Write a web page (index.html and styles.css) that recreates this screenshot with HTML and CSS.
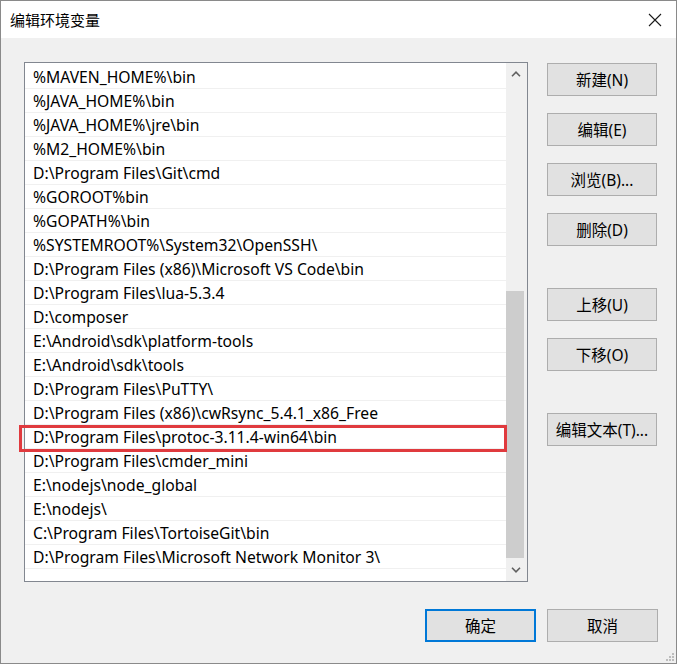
FILE: index.html
```html
<!DOCTYPE html>
<html lang="zh-CN">
<head>
<meta charset="utf-8">
<title>编辑环境变量</title>
<link rel="stylesheet" href="styles.css">
</head>
<body>
<div class="window">
  <div class="titlebar">
    <span class="title">编辑环境变量</span>
    <svg class="close" width="14" height="14" viewBox="0 0 14 14"><path d="M1 1 L13 13 M13 1 L1 13" stroke="#1a1a1a" stroke-width="1.1" fill="none"/></svg>
  </div>
  <div class="content">
    <div class="main">
      <div class="listbox">
        <ul class="items">
          <li>%MAVEN_HOME%\bin</li>
          <li>%JAVA_HOME%\bin</li>
          <li>%JAVA_HOME%\jre\bin</li>
          <li>%M2_HOME%\bin</li>
          <li>D:\Program Files\Git\cmd</li>
          <li>%GOROOT%bin</li>
          <li>%GOPATH%\bin</li>
          <li>%SYSTEMROOT%\System32\OpenSSH\</li>
          <li>D:\Program Files (x86)\Microsoft VS Code\bin</li>
          <li>D:\Program Files\lua-5.3.4</li>
          <li>D:\composer</li>
          <li>E:\Android\sdk\platform-tools</li>
          <li>E:\Android\sdk\tools</li>
          <li>D:\Program Files\PuTTY\</li>
          <li>D:\Program Files (x86)\cwRsync_5.4.1_x86_Free</li>
          <li>D:\Program Files\protoc-3.11.4-win64\bin</li>
          <li>D:\Program Files\cmder_mini</li>
          <li>E:\nodejs\node_global</li>
          <li>E:\nodejs\</li>
          <li>C:\Program Files\TortoiseGit\bin</li>
          <li>D:\Program Files\Microsoft Network Monitor 3\</li>
        </ul>
        <div class="scrollbar">
          <div class="arrow">
            <svg width="10" height="6" viewBox="0 0 10 6"><path d="M1 5.2 L5 1.2 L9 5.2" stroke="#606060" stroke-width="1.6" fill="none"/></svg>
          </div>
          <div class="track"><div class="thumb"></div></div>
          <div class="arrow">
            <svg width="10" height="6" viewBox="0 0 10 6"><path d="M1 0.8 L5 4.8 L9 0.8" stroke="#606060" stroke-width="1.6" fill="none"/></svg>
          </div>
        </div>
      </div>
      <div class="side">
        <button class="btn">新建(N)</button>
        <button class="btn">编辑(E)</button>
        <button class="btn">浏览(B)...</button>
        <button class="btn">删除(D)</button>
        <button class="btn group">上移(U)</button>
        <button class="btn">下移(O)</button>
        <button class="btn group">编辑文本(T)...</button>
      </div>
    </div>
    <div class="footer">
      <button class="btn wide primary">确定</button>
      <button class="btn wide">取消</button>
    </div>
  </div>
  <div class="highlight"></div>
  <svg class="grip" width="8" height="8" viewBox="0 0 8 8">
    <rect x="6" y="0" width="2" height="2" fill="#bdbdbd"/>
    <rect x="3" y="3" width="2" height="2" fill="#bdbdbd"/>
    <rect x="6" y="3" width="2" height="2" fill="#bdbdbd"/>
    <rect x="0" y="6" width="2" height="2" fill="#bdbdbd"/>
    <rect x="3" y="6" width="2" height="2" fill="#bdbdbd"/>
    <rect x="6" y="6" width="2" height="2" fill="#bdbdbd"/>
  </svg>
</div>
</body>
</html>
```
FILE: styles.css
```css
* { box-sizing: border-box; }
html, body { margin: 0; padding: 0; background: #f0f0f0; }
body {
  font-family: "Noto Sans", "Noto Sans CJK SC", sans-serif;
  font-size: 15px;
  color: #000;
}
.window {
  position: relative;
  width: 677px;
  height: 664px;
  border: 1px solid #8a8a8a;
  background: #f0f0f0;
  display: flex;
  flex-direction: column;
}
.titlebar {
  height: 37px;
  background: #fff;
  display: flex;
  align-items: center;
  justify-content: space-between;
  padding: 0 14px 0 9px;
  flex: none;
}
.title {
  font-family: "Noto Sans CJK SC", sans-serif;
  font-size: 15px;
  color: #000;
}
.close { display: block; }
.content {
  flex: 1;
  display: flex;
  flex-direction: column;
  padding: 24px 18px 0 23px;
}
.main {
  display: flex;
  gap: 19px;
  align-items: flex-start;
}
.listbox {
  width: 504px;
  height: 520px;
  border: 1px solid #828790;
  background: #fff;
  display: flex;
}
.items {
  list-style: none;
  margin: 0;
  padding: 2px 0 0 0;
  flex: 1;
  min-width: 0;
}
.items li {
  height: 24px;
  line-height: 25px;
  padding-left: 8px;
  border-bottom: 1px solid #f0f0f0;
  white-space: nowrap;
  font-size: 15.7px;
  overflow: hidden;
}
.scrollbar {
  width: 21px;
  background: #f0f0f0;
  display: flex;
  flex-direction: column;
  flex: none;
}
.arrow {
  height: 22px;
  display: flex;
  align-items: center;
  justify-content: center;
  flex: none;
}
.arrow svg { display: block; margin-left: -2px; }
.track { flex: 1; }
.thumb {
  margin-top: 206px;
  height: 267px;
  width: 18px;
  background: #cdcdcd;
}
.side {
  width: 110px;
  display: flex;
  flex-direction: column;
  gap: 17px;
  margin-top: 1px;
}
.btn {
  height: 33px;
  border: 1px solid #adadad;
  background: #e1e1e1;
  font-family: "Noto Sans", "Noto Sans CJK SC", sans-serif;
  font-size: 15.5px;
  color: #000;
  padding: 0;
}
.side .group { margin-top: 25px; }
.footer {
  display: flex;
  justify-content: flex-end;
  gap: 11px;
  margin-top: 27px;
}
.wide { width: 111px; }
.primary { border: 2px solid #0078d7; }
.highlight {
  position: absolute;
  left: 18px;
  top: 424px;
  width: 488px;
  height: 27px;
  border: 3px solid #e03a3e;
}
.grip {
  position: absolute;
  right: 2px;
  bottom: 2px;
}
```
